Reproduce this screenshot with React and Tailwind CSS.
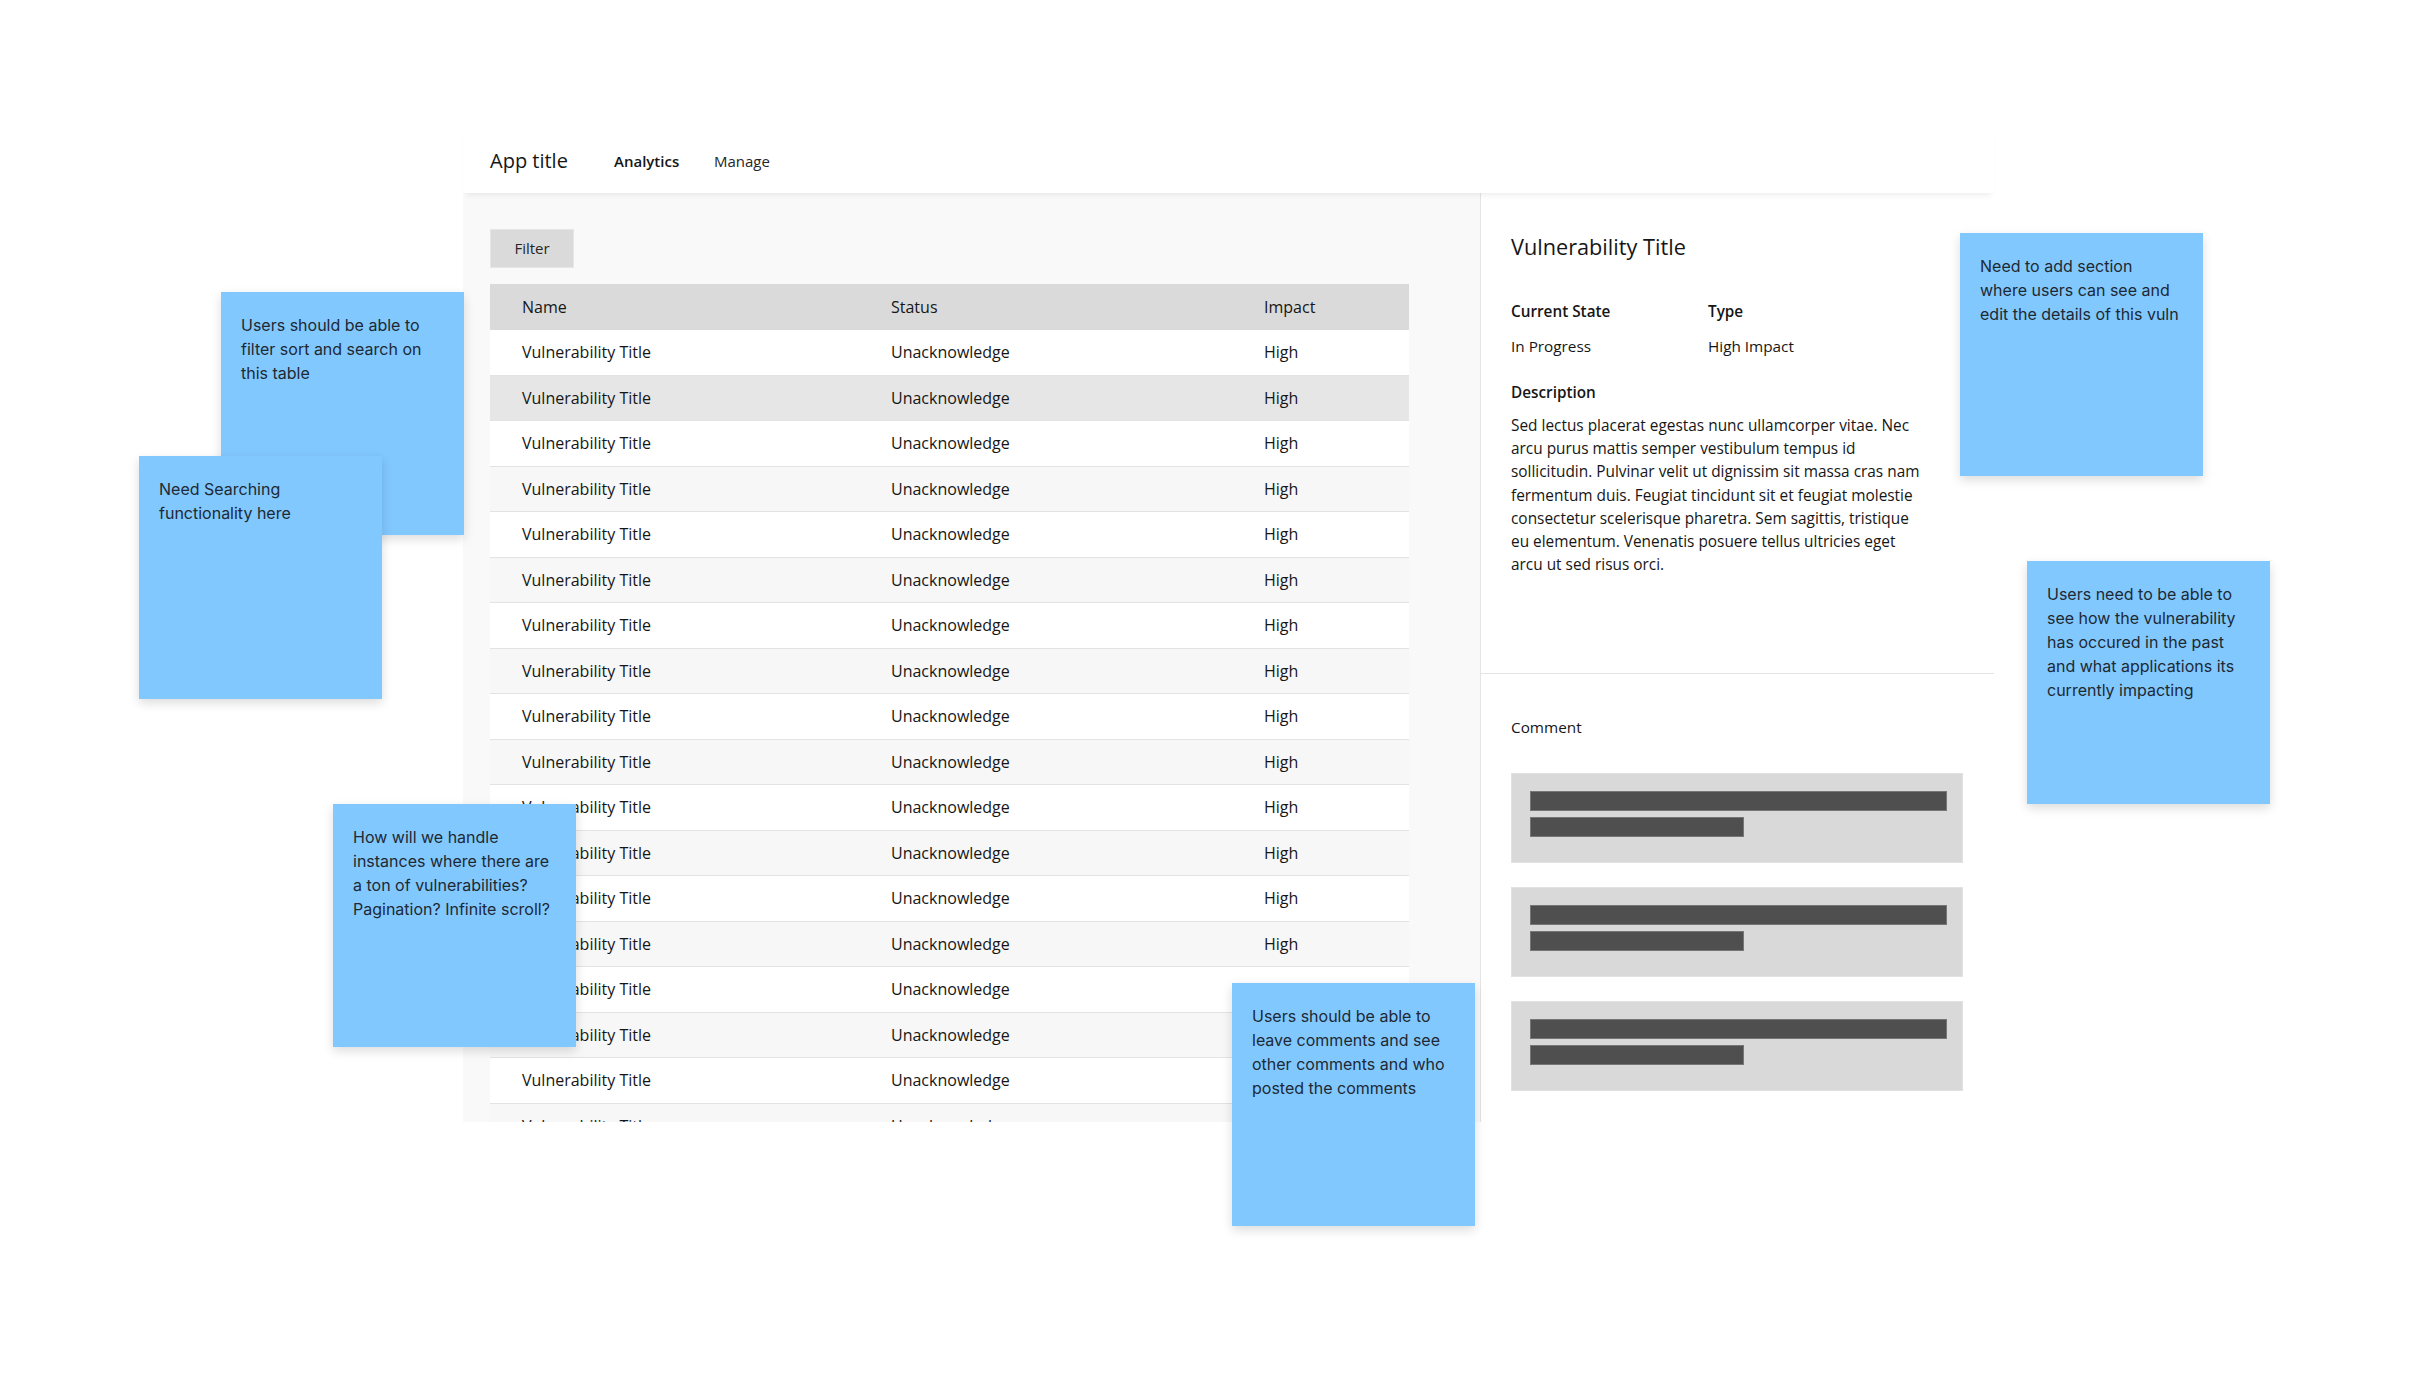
import React from "react";

const UI = { fontFamily: '"Open Sans", "Noto Sans", Roboto, sans-serif' };
const NOTE = { fontFamily: 'Inter, "Noto Sans", sans-serif' };

function Sticky({ className, children }) {
  return (
    <div
      style={NOTE}
      className={
        "absolute w-[243px] h-[243px] bg-[#81c8ff] px-[20px] pt-[21px] text-[16px] leading-[24px] text-[#1e2933] shadow-[0_4px_10px_rgba(0,0,0,0.14)] " +
        className
      }
    >
      {children}
    </div>
  );
}

const desc = [
  "Sed lectus placerat egestas nunc ullamcorper vitae. Nec",
  "arcu purus mattis semper vestibulum tempus id",
  "sollicitudin. Pulvinar velit ut dignissim sit massa cras nam",
  "fermentum duis. Feugiat tincidunt sit et feugiat molestie",
  "consectetur scelerisque pharetra. Sem sagittis, tristique",
  "eu elementum. Venenatis posuere tellus ultricies eget",
  "arcu ut sed risus orci.",
];

function Row({ i }) {
  let bg = i % 2 === 0 ? "bg-white" : "bg-[#f7f7f7]";
  if (i === 1) bg = "bg-[#e6e6e6]";
  return (
    <div
      className={
        "grid grid-cols-[369px_373px_177px] h-[45.5px] items-center border-b border-[#e3e3e3] text-[16px] text-[#161616] " +
        bg
      }
    >
      <div className="pl-[32px]">Vulnerability Title</div>
      <div className="pl-[32px]">Unacknowledge</div>
      <div className="pl-[32px]">High</div>
    </div>
  );
}

function CommentBox() {
  return (
    <div className="h-[90px] bg-[#d9d9d9] border border-[#e2e2e2] pl-[18px] pt-[17px] flex flex-col gap-[6px]">
      <div className="w-[417px] h-[20px] bg-[#4f4f4f] border border-[#767676]" />
      <div className="w-[214px] h-[20px] bg-[#4f4f4f] border border-[#767676]" />
    </div>
  );
}

export default function App() {
  const rows = Array.from({ length: 19 }, (_, i) => i);
  return (
    <div className="relative w-[2409px] h-[1374px] bg-white overflow-hidden" style={UI}>
      <div className="pt-[129px] pl-[463px]">
        <div className="w-[1531px] h-[993px] flex flex-col">
          {/* Header */}
          <div className="relative z-10 h-[64px] bg-white flex items-center pl-[27px] shadow-[0_5px_6px_-3px_rgba(0,0,0,0.08)]">
            <div className="w-[124px] text-[20px] text-[#161616]">App title</div>
            <div className="w-[100px] text-[15px] font-semibold text-[#161616]">Analytics</div>
            <div className="text-[15px] text-[#262626]">Manage</div>
          </div>
          {/* Body */}
          <div className="flex h-[929px]">
            <div className="w-[1018px] h-full bg-[#f9f9f9] border-r border-[#e4e4e4] overflow-hidden pl-[27px] pt-[36px]">
              <div className="w-[84px] h-[39px] bg-[#dadada] border border-[#e6e6e6] flex items-center justify-center text-[15px] text-[#262626]">
                Filter
              </div>
              <div className="mt-[16px] w-[919px]">
                <div className="grid grid-cols-[369px_373px_177px] h-[46px] items-center bg-[#dadada] text-[16px] text-[#161616]">
                  <div className="pl-[32px]">Name</div>
                  <div className="pl-[32px]">Status</div>
                  <div className="pl-[32px]">Impact</div>
                </div>
                {rows.map((i) => (
                  <Row key={i} i={i} />
                ))}
              </div>
            </div>
            <div className="flex-1 h-full bg-white flex flex-col">
              <div className="h-[481px] border-b border-[#e4e4e4] pl-[30px] pt-[40px] text-[#161616]">
                <div className="text-[21.7px] leading-[28px]">Vulnerability Title</div>
                <div className="mt-[40px] flex text-[15.3px] leading-[20px]">
                  <div className="w-[197px]">
                    <div className="font-semibold">Current State</div>
                    <div className="mt-[15px]">In Progress</div>
                  </div>
                  <div>
                    <div className="font-semibold">Type</div>
                    <div className="mt-[15px]">High Impact</div>
                  </div>
                </div>
                <div className="mt-[26px] text-[15.3px] leading-[20px] font-semibold">Description</div>
                <div className="mt-[12px] text-[15.4px] leading-[23.2px]">
                  {desc.map((l, k) => (
                    <div key={k}>{l}</div>
                  ))}
                </div>
              </div>
              <div className="pl-[30px] pr-[31px] pt-[43px]">
                <div className="text-[15.3px] leading-[20px] font-medium text-[#161616]">Comment</div>
                <div className="mt-[36px] flex flex-col gap-[24px]">
                  <CommentBox />
                  <CommentBox />
                  <CommentBox />
                </div>
              </div>
            </div>
          </div>
        </div>
      </div>

      <Sticky className="left-[221px] top-[292px]">
        Users should be able to filter sort and search on this table
      </Sticky>
      <Sticky className="left-[139px] top-[456px]">
        Need Searching
        <br />
        functionality here
      </Sticky>
      <Sticky className="left-[333px] top-[804px]">
        How will we handle instances where there are a ton of vulnerabilities? Pagination? Infinite scroll?
      </Sticky>
      <Sticky className="left-[1232px] top-[983px]">
        Users should be able to leave comments and see other comments and who posted the comments
      </Sticky>
      <Sticky className="left-[1960px] top-[233px]">
        Need to add section where users can see and edit the details of this vuln
      </Sticky>
      <Sticky className="left-[2027px] top-[561px]">
        Users need to be able to see how the vulnerability has occured in the past and what applications its currently impacting
      </Sticky>
    </div>
  );
}
